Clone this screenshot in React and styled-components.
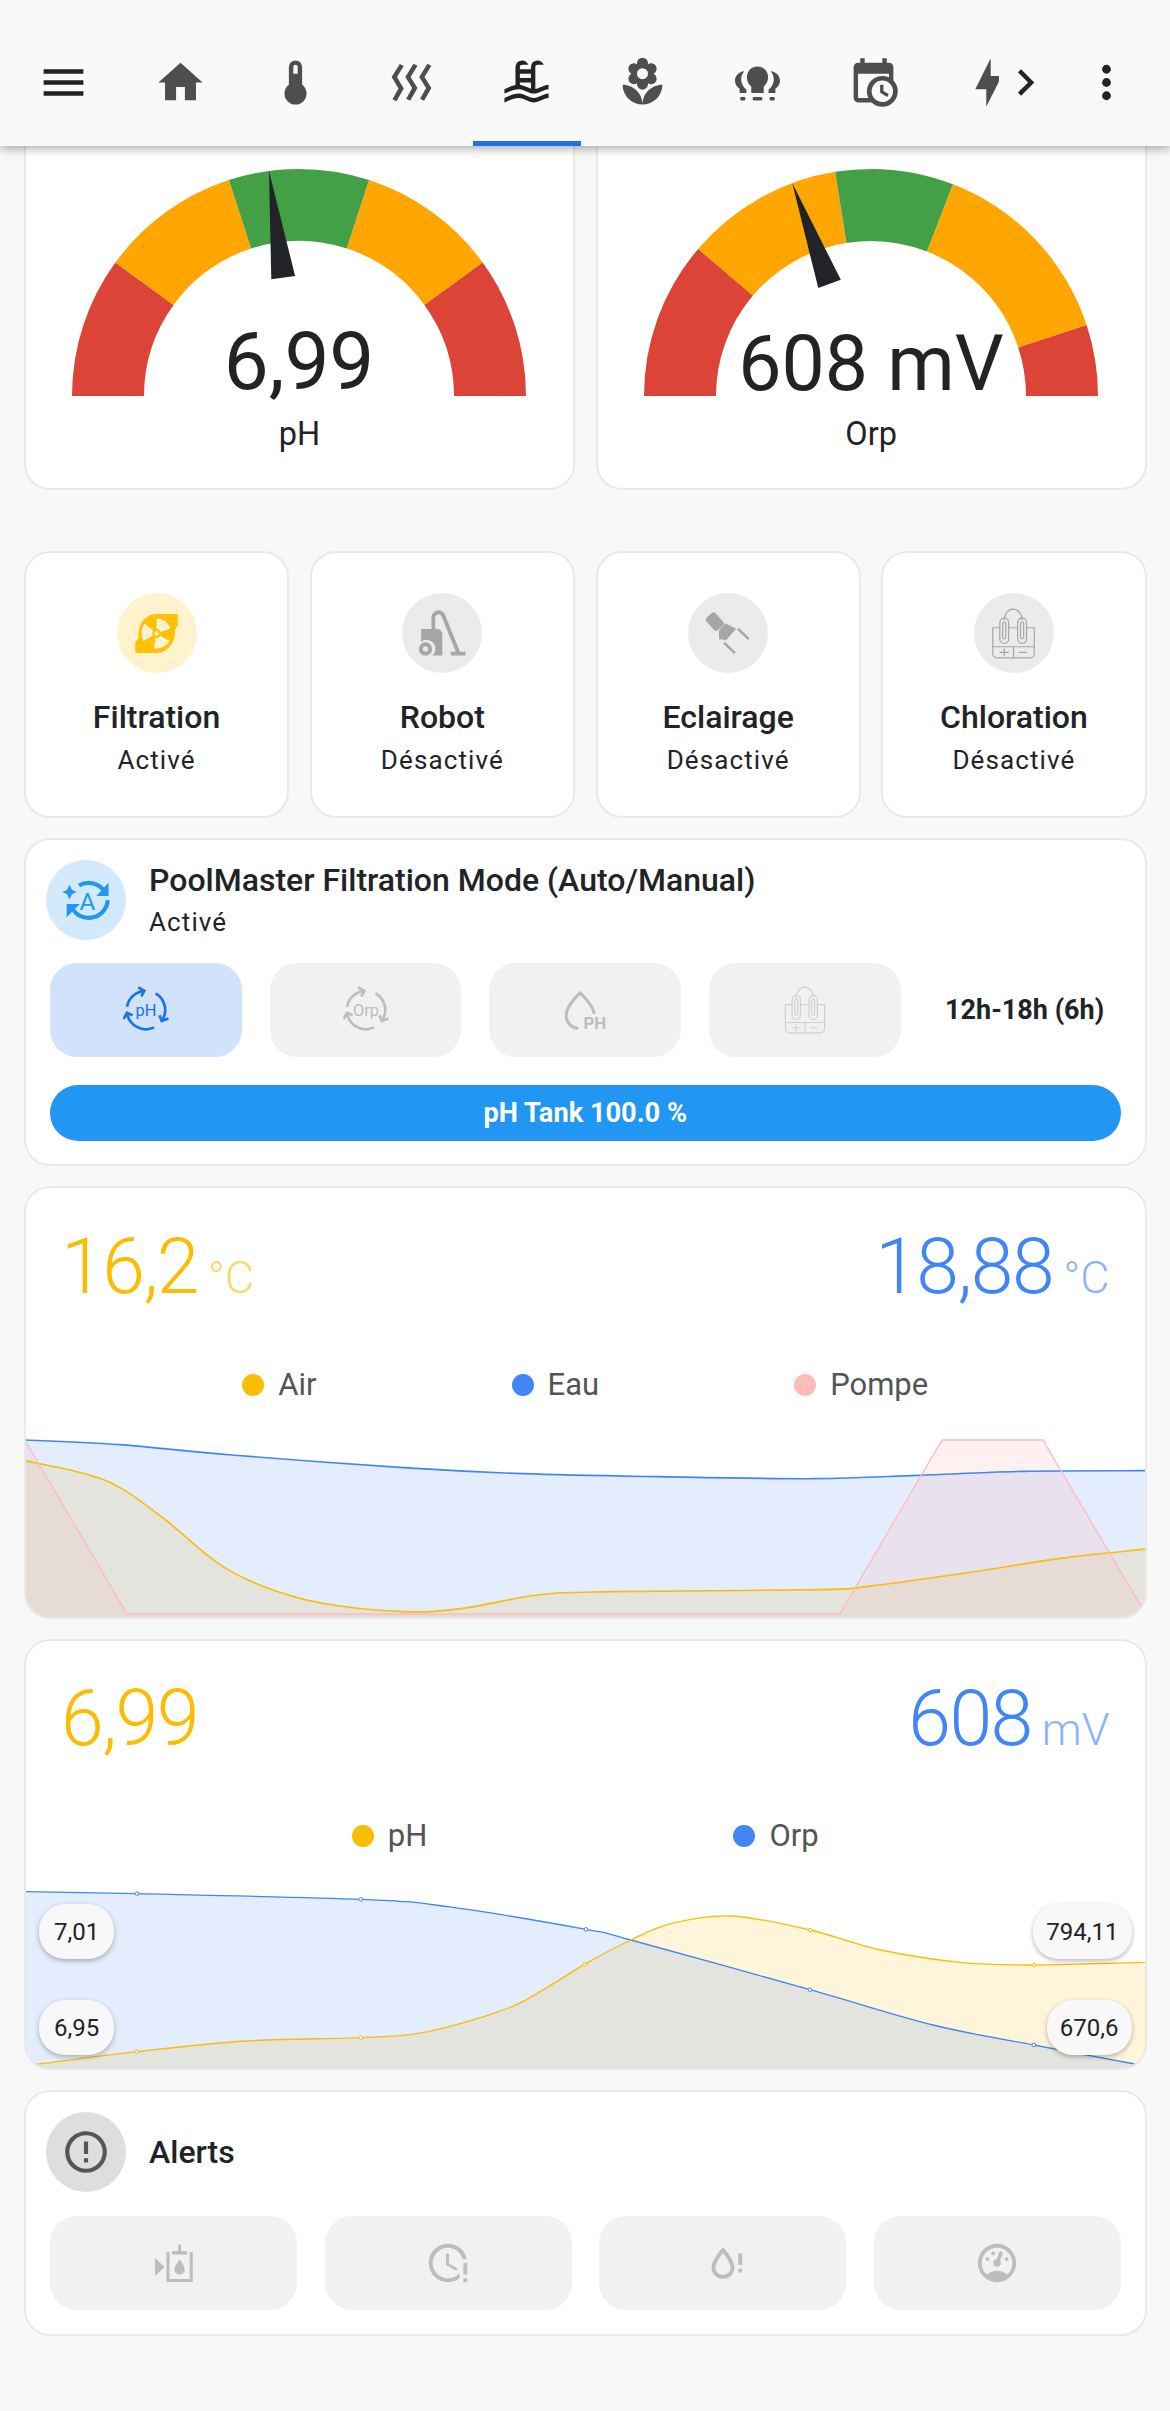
import React from 'react';
import styled, { createGlobalStyle } from 'styled-components';

const Global = createGlobalStyle`
  html, body { margin: 0; padding: 0; background: #f8f8f8; }
  body { font-family: Roboto, "Liberation Sans", sans-serif; color: #212327; }
  #root { height: 2411px; overflow: hidden; }
  * { box-sizing: border-box; }
`;

const P = {
  menu: 'M3,6H21V8H3V6M3,11H21V13H3V11M3,16H21V18H3V16Z',
  home: 'M10,20V14H14V20H19V12H22L12,3L2,12H5V20H10Z',
  thermo: 'M15 13V5A3 3 0 0 0 9 5V13A5 5 0 1 0 15 13M12 4A1 1 0 0 1 13 5V8H11V5A1 1 0 0 1 12 4Z',
  heat: 'M8.5 4.5L5.4 9.5L8.5 14.7L5.2 20.5L3.4 19.6L6.1 14.7L3 9.5L6.7 3.6L8.5 4.5M14.7 4.4L11.6 9.5L14.7 14.5L11.4 20.3L9.6 19.4L12.3 14.5L9.2 9.5L12.9 3.5L14.7 4.4M21 4.4L17.9 9.5L21 14.5L17.7 20.3L15.9 19.4L18.6 14.5L15.5 9.5L19.2 3.5L21 4.4',
  pool: 'M2,15C3.67,14.25 5.33,13.5 7,13.17V5A3,3 0 0,1 10,2C11.31,2 12.42,2.83 12.83,4H10A1,1 0 0,0 9,5V6H14V5A3,3 0 0,1 17,2C18.31,2 19.42,2.83 19.83,4H17A1,1 0 0,0 16,5V14.94C18,14.62 20,13 22,13V15C19.78,15 17.56,17 15.33,17C13.11,17 10.89,15 8.67,15C6.44,15 4.22,16 2,17V15M14,8H9V10H14V8M14,12H9V13C10.67,13.33 12.33,14.08 14,14.83V12M2,19C4.22,18 6.44,17 8.67,17C10.89,17 13.11,19 15.33,19C17.56,19 19.78,17 22,17V19C19.78,19 17.56,21 15.33,21C13.11,21 10.89,19 8.67,19C6.44,19 4.22,20 2,21V19Z',
  flower: 'M3,13A9,9 0 0,0 12,22C12,17 7.97,13 3,13M12,5.5A2.5,2.5 0 0,1 14.5,8A2.5,2.5 0 0,1 12,10.5A2.5,2.5 0 0,1 9.5,8A2.5,2.5 0 0,1 12,5.5M5.6,10.25A2.5,2.5 0 0,0 8.1,12.75C8.63,12.75 9.12,12.58 9.5,12.31C9.5,12.47 9.5,12.63 9.5,12.75A2.5,2.5 0 0,0 12,15.25A2.5,2.5 0 0,0 14.5,12.75C14.5,12.63 14.5,12.47 14.5,12.31C14.88,12.58 15.37,12.75 15.9,12.75C17.28,12.75 18.4,11.63 18.4,10.25C18.4,9.25 17.81,8.4 16.97,8C17.81,7.6 18.4,6.74 18.4,5.75C18.4,4.37 17.28,3.25 15.9,3.25C15.37,3.25 14.88,3.41 14.5,3.69C14.5,3.53 14.5,3.38 14.5,3.25A2.5,2.5 0 0,0 12,0.75A2.5,2.5 0 0,0 9.5,3.25C9.5,3.38 9.5,3.53 9.5,3.69C9.12,3.41 8.63,3.25 8.1,3.25A2.5,2.5 0 0,0 5.6,5.75C5.6,6.74 6.19,7.6 7.03,8C6.19,8.4 5.6,9.25 5.6,10.25M12,22A9,9 0 0,0 21,13C16,13 12,17 12,22Z',
  calendar: 'M15,13H16.5V15.82L18.94,17.23L18.19,18.53L15,16.69V13M19,8H5V19H9.67C9.24,18.09 9,17.07 9,16A7,7 0 0,1 16,9C17.07,9 18.09,9.24 19,9.67V8M5,21C3.89,21 3,20.1 3,19V5C3,3.89 3.89,3 5,3H6V1H8V3H16V1H18V3H19A2,2 0 0,1 21,5V11.1C22.24,12.36 23,14.09 23,16A7,7 0 0,1 16,23C14.09,23 12.36,22.24 11.1,21H5M16,11.15A4.85,4.85 0 0,0 11.15,16C11.15,18.68 13.32,20.85 16,20.85A4.85,4.85 0 0,0 20.85,16C20.85,13.32 18.68,11.15 16,11.15Z',
  bolt: 'M11 15H6L13 1V9H18L11 23V15Z',
  chevron: 'M8.59,16.58L13.17,12L8.59,7.41L10,6L16,12L10,18L8.59,16.58Z',
  dots: 'M12,16A2,2 0 0,1 14,18A2,2 0 0,1 12,20A2,2 0 0,1 10,18A2,2 0 0,1 12,16M12,10A2,2 0 0,1 14,12A2,2 0 0,1 12,14A2,2 0 0,1 10,12A2,2 0 0,1 12,10M12,4A2,2 0 0,1 14,6A2,2 0 0,1 12,8A2,2 0 0,1 10,6A2,2 0 0,1 12,4Z',
  alertCircle: 'M11,15H13V17H11V15M11,7H13V13H11V7M12,2C6.47,2 2,6.5 2,12A10,10 0 0,0 12,22A10,10 0 0,0 22,12A10,10 0 0,0 12,2M12,20A8,8 0 0,1 4,12A8,8 0 0,1 12,4A8,8 0 0,1 20,12A8,8 0 0,1 12,20Z',
  clockAlert: 'M11 7V13L16.2 16.1L17 14.9L12.5 12.2V7H11M20 12V18H22V12H20M20 20V22H22V20H20M18 20C16.3 21.3 14.3 22 12 22C6.5 22 2 17.5 2 12S6.5 2 12 2C16.8 2 20.9 5.4 21.8 10H19.7C18.8 6.6 15.7 4 12 4C7.6 4 4 7.6 4 12S7.6 20 12 20C14.4 20 16.5 18.9 18 17.3V20Z',
  waterAlert: 'M12 3.77L11.25 4.61C11.25 4.61 9.97 6.06 8.68 7.94C7.39 9.82 6 12.07 6 14.23A6 6 0 0 0 12 20.23A6 6 0 0 0 18 14.23C18 12.07 16.61 9.82 15.32 7.94C14.03 6.06 12.75 4.61 12.75 4.61L12 3.77M12 6.9C12.44 7.42 12.84 7.85 13.68 9.07C14.89 10.83 16 13.07 16 14.23C16 16.45 14.22 18.23 12 18.23C9.78 18.23 8 16.45 8 14.23C8 13.07 9.11 10.83 10.32 9.07C11.16 7.85 11.56 7.42 12 6.9M20 7V13H22V7H20M20 15V17H22V15H20Z',
  gauge: 'M12,2A10,10 0 0,0 2,12A10,10 0 0,0 12,22A10,10 0 0,0 22,12A10,10 0 0,0 12,2M12,4A8,8 0 0,1 20,12C20,14.4 19,16.5 17.3,18C15.9,16.7 14,16 12,16C10,16 8.2,16.7 6.7,18C5,16.5 4,14.4 4,12A8,8 0 0,1 12,4M14,5.89C13.62,5.9 13.26,6.15 13.1,6.54L11.81,9.77L11.71,10C11,10.13 10.41,10.6 10.14,11.26C9.73,12.29 10.23,13.45 11.26,13.86C12.29,14.27 13.45,13.77 13.86,12.74C14.12,12.08 14,11.32 13.57,10.76L13.67,10.5L14.96,7.29L14.97,7.26C15.17,6.75 14.92,6.17 14.41,5.96C14.28,5.91 14.15,5.89 14,5.89M10,6A1,1 0 0,0 9,7A1,1 0 0,0 10,8A1,1 0 0,0 11,7A1,1 0 0,0 10,6M7,9A1,1 0 0,0 6,10A1,1 0 0,0 7,11A1,1 0 0,0 8,10A1,1 0 0,0 7,9M17,9A1,1 0 0,0 16,10A1,1 0 0,0 17,11A1,1 0 0,0 18,10A1,1 0 0,0 17,9Z',
};

const Header = styled.header`
  position: relative;
  z-index: 2;
  height: 146px;
  display: flex;
  align-items: flex-start;
  background: #f9f9f9;
  box-shadow: 0 3px 9px rgba(0, 0, 0, 0.32);
`;
const ToolIcon = styled.span`
  flex: none;
  width: 53px;
  height: 53px;
  margin: 56px 0 0 ${p => p.$left || 0}px;
  color: #212327;
`;
const TabStrip = styled.nav`
  flex: none;
  width: 873px;
  margin-left: 36.5px;
  display: flex;
  gap: 7.5px;
  overflow: hidden;
`;
const Tab = styled.div`
  flex: 0 0 108px;
  height: 146px;
  padding-top: 24px;
  display: flex;
  align-items: center;
  justify-content: center;
  border-bottom: 5px solid ${p => (p.$active ? '#1a73e8' : 'transparent')};
  color: ${p => (p.$active ? '#212327' : '#4d4e50')};
`;
const Svg = styled.svg`
  display: block;
  width: ${p => p.$size || 53}px;
  height: ${p => p.$size || 53}px;
  fill: currentColor;
`;
const Icon = ({ d, size }) => (
  <Svg viewBox="0 0 24 24" $size={size}><path d={d} /></Svg>
);

const BulbGroup = () => (
  <Svg viewBox="0 0 24 24">
    <path d="M12 4.8C9.2 4.8 7.2 6.9 7.2 9.6C7.2 11.6 8.2 13 9.2 13.9V16.8H14.8V13.9C15.8 13 16.8 11.6 16.8 9.6C16.8 6.9 14.8 4.8 12 4.8Z" />
    <rect x="9.8" y="18.6" width="4.4" height="1.5" rx=".6" />
    <path d="M6 6.9C3.6 7.1 1.8 9 1.8 11.2C1.8 12.8 2.8 14 3.9 14.8V16.8H7V15.3C6 14.6 5.6 13.8 5.1 12.8C4.2 10.8 4.6 8.6 6 6.9Z" />
    <rect x="4.2" y="18.6" width="2.3" height="1.5" rx=".5" />
    <g transform="translate(24 0) scale(-1 1)">
      <path d="M6 6.9C3.6 7.1 1.8 9 1.8 11.2C1.8 12.8 2.8 14 3.9 14.8V16.8H7V15.3C6 14.6 5.6 13.8 5.1 12.8C4.2 10.8 4.6 8.6 6 6.9Z" />
      <rect x="4.2" y="18.6" width="2.3" height="1.5" rx=".5" />
    </g>
  </Svg>
);

const polar = (r, a) => {
  const t = (a * Math.PI) / 180;
  return [-r * Math.cos(t), -r * Math.sin(t)];
};
const annular = (r0, r1, a0, a1) => {
  const [x0, y0] = polar(r1, a0);
  const [x1, y1] = polar(r1, a1);
  const [x2, y2] = polar(r0, a1);
  const [x3, y3] = polar(r0, a0);
  return `M${x0} ${y0}A${r1} ${r1} 0 0 1 ${x1} ${y1}L${x2} ${y2}A${r0} ${r0} 0 0 0 ${x3} ${y3}Z`;
};

const FanPump = () => (
  <Svg viewBox="0 0 24 24" $size={53}>
    <path fill="#ffc107" d="M12 3.2H21.6V8.2C21.2 9.2 20.6 10 20.4 10.5C20.7 15.8 17 20.8 12 20.8H2.4V15.8L3.9 14.2C3.2 8.5 6.5 3.4 12 3.2Z" />
    <g transform="translate(12 12)" fill="#fff3cd">
      <path d={annular(2, 6.8, 90, 160)} />
      <path d={annular(2, 6.8, 210, 280)} />
      <path d={annular(2, 6.8, 330, 400)} />
      <circle r="1" />
    </g>
  </Svg>
);

const Vacuum = () => (
  <Svg viewBox="0 0 24 24">
    <path d="M2.3 10H7V4.8A3.2 3.2 0 0 1 13.2 3.6L19.9 20.3H22.4V22H15.7V20.3H18L11.6 4.3A1.5 1.5 0 0 0 8.7 4.9V10H9.6A2.3 2.3 0 0 1 11.9 12.3V22H7.4A4 4 0 0 0 2.3 15.8Z" />
    <path fillRule="evenodd" d="M4.3 16A3 3 0 1 1 4.29 22A3 3 0 1 1 4.3 16ZM4.3 17.8A1.2 1.2 0 1 0 4.31 20.2A1.2 1.2 0 1 0 4.3 17.8Z" />
  </Svg>
);

const Spot = () => (
  <Svg viewBox="0 0 24 24">
    <rect x="3" y="2.8" width="5.6" height="7.6" rx="1.4" transform="rotate(-42 5.8 6.6)" />
    <path d="M10.6 7.4L15.4 9.8L11 14.9L7.7 14.6L7.7 10.6Z" />
    <path d="M16.2 9.8L21.2 14.6M10 16.1L14.9 20.9" stroke="currentColor" strokeWidth="1.1" fill="none" />
  </Svg>
);

const CellSvg = styled(Svg)`
  fill: none;
`;
const Cell = ({ size = 53 }) => (
  <CellSvg viewBox="0 0 24 24" $size={size}>
    <g stroke="currentColor" strokeWidth=".55">
      <path d="M5.8 9.4H2.6V21A2 2 0 0 0 4.6 23H19.4A2 2 0 0 0 21.4 21V9.4H18M9.8 9.4H13.9" />
      <path d="M2.6 18H21.4M12 18V23M5.7 20.5H9.9M7.8 18.8V22.2M14.2 20.5H18" />
      <path d="M7.8 6A4.05 5 0 0 1 15.9 6" />
      <rect x="5.8" y="5" width="4" height="11.5" rx="2" />
      <rect x="13.9" y="5" width="4" height="11.5" rx="2" />
      <rect x="7.1" y="6.8" width="1.4" height="7.6" rx=".7" />
      <rect x="15.2" y="6.8" width="1.4" height="7.6" rx=".7" />
    </g>
  </CellSvg>
);

const ModeIcon = () => (
  <Svg viewBox="0 0 24 24">
    <path d="M8.6 5.2A8.6 8.6 0 0 1 20.4 8.4M21.6 11.8A8.6 8.6 0 0 1 5.6 15.6" fill="none" stroke="currentColor" strokeWidth="1.9" />
    <path d="M22 4V10H16.4ZM3 19.6V13.6H9Z" />
    <path d="M4.3 4.8L5.4 7.2L7.6 8.2L5.4 9.2L4.3 11.6L3.2 9.2L1 8.2L3.2 7.2Z" />
    <text x="12.4" y="16.4" textAnchor="middle" fontSize="11" fontFamily="Roboto, sans-serif">A</text>
  </Svg>
);

const Cycle = ({ label }) => {
  const c = (a, r = 9.6) => {
    const t = (a * Math.PI) / 180;
    return [12 + r * Math.sin(t), 12 - r * Math.cos(t)];
  };
  const arcs = [[-80, -5], [30, 125], [155, 262]].map(([a, b]) => {
    const [x0, y0] = c(a);
    const [x1, y1] = c(b);
    const [ax, ay] = c(b - 14, 12);
    const [bx, by] = c(b - 14, 7.2);
    return `M${x0} ${y0}A9.6 9.6 0 0 1 ${x1} ${y1}M${ax} ${ay}L${x1} ${y1}L${bx} ${by}`;
  });
  return (
    <Svg viewBox="0 0 24 24" $size={48}>
      <path d={arcs.join('')} fill="none" stroke="currentColor" strokeWidth="1.35" />
      <text x="12" y="15" textAnchor="middle" fontSize="8.2" fontFamily="Roboto, sans-serif">{label}</text>
    </Svg>
  );
};

const DropPh = () => (
  <Svg viewBox="0 0 24 24" $size={48}>
    <path d="M16.6 14C16.4 10 9.6 3.4 9.6 3.4C9.6 3.4 2.6 9.6 2.6 14.6C2.6 18.2 5 20.8 8.6 21.2" fill="none" stroke="currentColor" strokeWidth="1.5" />
    <text x="11.2" y="21.5" fontSize="8.4" fontWeight="700" fontFamily="Roboto, sans-serif">PH</text>
  </Svg>
);

const TankIcon = () => (
  <Svg viewBox="0 0 24 24" $size={48}>
    <path d="M2.5 9.5L7.3 14L2.5 18.5Z" />
    <path d="M9 6.5V20.7H20.6V6.5" fill="none" stroke="currentColor" strokeWidth="1.5" />
    <path d="M14.1 2.8H15.5V6H18.6V7.7H11V6H14.1Z" />
    <path d="M14.8 10.2C14.8 10.2 12.2 13.4 12.2 15.2A2.6 2.6 0 0 0 17.4 15.2C17.4 13.4 14.8 10.2 14.8 10.2Z" />
  </Svg>
);

const Main = styled.main`
  padding: 0 23.5px 0 24px;
  display: flex;
  flex-direction: column;
  gap: 20px;
`;
const Card = styled.section`
  background: #fff;
  border: 2px solid #e9e9e9;
  border-radius: 26px;
  overflow: hidden;
`;
const GaugeRow = styled.div`
  display: grid;
  grid-template-columns: 1fr 1fr;
  gap: 21px;
  margin-bottom: 41px;
`;
const GaugeCard = styled(Card)`
  height: 344px;
  border-top: 0;
  border-radius: 0 0 26px 26px;
  padding-top: 22px;
  display: flex;
  flex-direction: column;
  align-items: center;
`;
const GaugeSvg = styled.svg`
  display: block;
  width: 480px;
  height: 228px;
  overflow: visible;
  flex: none;
`;
const GaugeValue = styled.text`
  font-family: Roboto, sans-serif;
  fill: #212327;
  text-anchor: middle;
`;
const GaugeLabel = styled.div`
  margin-top: 18px;
  font-size: 32.5px;
  line-height: 40px;
  color: #212327;
`;
const Gauge = ({ value, fontSize, baseline, segments, needle, label }) => (
  <GaugeCard>
    <GaugeSvg viewBox="-240 -228 480 228">
      {segments.map(([a0, a1, color]) => (
        <path key={a0} d={annular(155, 227, a0, a1)} fill={color} />
      ))}
      <polygon points="-119.5,-12 -227,0 -119.5,12" fill="#212327" transform={`rotate(${needle})`} />
      <GaugeValue y={baseline} fontSize={fontSize}>{value}</GaugeValue>
    </GaugeSvg>
    <GaugeLabel>{label}</GaugeLabel>
  </GaugeCard>
);

const TileRow = styled.div`
  display: grid;
  grid-template-columns: repeat(4, 1fr);
  gap: 20.7px;
`;
const Tile = styled(Card)`
  height: 267px;
  padding-top: 40px;
  display: flex;
  flex-direction: column;
  align-items: center;
`;
const IconDisc = styled.div`
  flex: none;
  width: 80px;
  height: 80px;
  border-radius: 50%;
  display: flex;
  align-items: center;
  justify-content: center;
  background: ${p => p.$bg};
  color: ${p => p.$fg};
`;
const Title = styled.div`
  font-size: 32px;
  font-weight: 500;
  line-height: 36px;
  color: #212327;
`;
const Sub = styled.div`
  font-size: 26px;
  line-height: 32px;
  letter-spacing: 1.1px;
  color: #212327;
`;
const TileTitle = styled(Title)`
  margin-top: 26px;
`;
const TileSub = styled(Sub)`
  margin-top: 9px;
`;
const HeadRow = styled.div`
  display: flex;
  align-items: center;
  gap: 23px;
  padding: 20px 0 0 20px;
`;
const HeadText = styled.div`
  display: flex;
  flex-direction: column;
  gap: 8px;
`;
const ModeCard = styled(Card)`
  height: 328px;
`;
const ButtonGrid = styled.div`
  display: grid;
  grid-template-columns: repeat(${p => p.$cols}, 1fr);
  gap: ${p => p.$gap}px;
  margin: ${p => p.$top}px 24px ${p => p.$bottom || 0}px;
`;
const ActionButton = styled.div`
  height: 94px;
  border-radius: 27px;
  display: flex;
  align-items: center;
  justify-content: center;
  background: ${p => (p.$active ? '#d1e3fa' : '#f1f1f3')};
  color: ${p => p.$fg || (p.$active ? '#1a73e8' : '#bdbdbd')};
`;
const Schedule = styled.div`
  display: flex;
  align-items: center;
  justify-content: center;
  font-size: 27px;
  font-weight: 700;
  white-space: nowrap;
  color: #212327;
`;
const TankBar = styled.div`
  height: 56px;
  margin: 28px 24px 0;
  border-radius: 28px;
  background: #2196f3;
  color: #fff;
  font-size: 27.2px;
  font-weight: 700;
  display: flex;
  align-items: center;
  justify-content: center;
`;

const ChartCard = styled(Card)`
  height: ${p => p.$height}px;
  position: relative;
`;
const ValueRow = styled.div`
  display: flex;
  justify-content: space-between;
  padding: ${p => p.$top}px 35px 0;
`;
const Reading = styled.div`
  display: flex;
  align-items: baseline;
  gap: 10px;
  font-weight: 300;
  color: ${p => p.$color};
`;
const ReadingValue = styled.span`
  font-size: 77px;
  line-height: 77px;
  letter-spacing: -1.5px;
`;
const ReadingUnit = styled.span`
  font-size: 45px;
  line-height: 45px;
  opacity: 0.6;
`;
const Legend = styled.div`
  display: flex;
  justify-content: center;
  gap: ${p => p.$gap}px;
  margin-top: ${p => p.$top}px;
`;
const LegendItem = styled.div`
  display: flex;
  align-items: center;
  gap: 14px;
  font-size: 31px;
  line-height: 36px;
  color: #555;
`;
const LegendDot = styled.i`
  display: block;
  width: 22px;
  height: 22px;
  border-radius: 50%;
  background: ${p => p.$color};
`;
const Plot = styled.svg`
  display: block;
  width: 100%;
  height: ${p => p.$height}px;
  margin-top: ${p => p.$top}px;
  overflow: hidden;
`;
const Bubble = styled.div`
  position: absolute;
  ${p => (p.$right ? `right: ${p.$right}px;` : `left: ${p.$left}px;`)}
  top: ${p => p.$y}px;
  height: 55px;
  padding: 0 ${p => p.$pad || 15}px;
  border-radius: 26px;
  background: #f8f8f8;
  box-shadow: 0 2px 5px rgba(0, 0, 0, 0.28);
  display: flex;
  align-items: center;
  font-size: 24px;
  color: #212327;
`;

const smooth = pts => {
  let d = `M${pts[0][0]} ${pts[0][1]}`;
  for (let i = 0; i < pts.length - 1; i++) {
    const p0 = pts[Math.max(i - 1, 0)];
    const p1 = pts[i];
    const p2 = pts[i + 1];
    const p3 = pts[Math.min(i + 2, pts.length - 1)];
    const c1 = [p1[0] + (p2[0] - p0[0]) / 6, p1[1] + (p2[1] - p0[1]) / 6];
    const c2 = [p2[0] - (p3[0] - p1[0]) / 6, p2[1] - (p3[1] - p1[1]) / 6];
    d += `C${c1[0]} ${c1[1]} ${c2[0]} ${c2[1]} ${p2[0]} ${p2[1]}`;
  }
  return d;
};
const toPlot = (raw, top) => raw.map(([x, y]) => [x / 1.34 - 26, (y - top) / 3]);
const linePath = (pts, curved) => (curved ? smooth(pts) : `M${pts.map(p => p.join(' ')).join('L')}`);

const AreaFill = ({ pts, color, curved = true, opacity = 0.15 }) => (
  <path
    d={`${linePath(pts, curved)}L${pts[pts.length - 1][0]} 180L${pts[0][0]} 180Z`}
    fill={color}
    fillOpacity={opacity}
  />
);
const AreaLine = ({ pts, color, curved = true, width = 1.6 }) => (
  <path d={linePath(pts, curved)} fill="none" stroke={color} strokeWidth={width} />
);

const eau = toPlot([[33, 783], [160, 797], [310, 828], [540, 866], [700, 884], [880, 893], [1090, 899], [1230, 889], [1370, 877], [1535, 875]], 780);
const air = toPlot([[33, 845], [110, 882], [160, 925], [220, 1020], [290, 1150], [350, 1220], [430, 1272], [540, 1298], [620, 1288], [720, 1248], [820, 1238], [1100, 1232], [1170, 1220], [1300, 1180], [1420, 1138], [1535, 1110]], 780);
const pompe = toPlot([[33, 783], [170, 1305], [1125, 1305], [1262, 783], [1397, 783], [1535, 1305]], 780);
const orp = toPlot([[33, 790], [183, 796], [483, 813], [600, 835], [785, 903], [845, 935], [1085, 1084], [1250, 1190], [1385, 1250], [1520, 1307]], 788);
const ph = toPlot([[48, 1308], [183, 1270], [330, 1238], [483, 1228], [560, 1215], [640, 1170], [700, 1120], [783, 1008], [845, 935], [900, 885], [980, 863], [1085, 905], [1180, 965], [1290, 1003], [1385, 1010], [1535, 1002]], 788);
const orpDots = toPlot([[183, 796], [483, 813], [785, 903], [1085, 1084], [1385, 1250]], 788);
const phDots = toPlot([[183, 1270], [483, 1228], [783, 1008], [1085, 905], [1385, 1010]], 788);

const YELLOW = '#fbbc04';
const BLUE = '#4285f4';
const PINK = '#ffbaba';

const IconGray = { $bg: '#ebebeb', $fg: '#a6a6a6' };

const App = () => (
  <>
    <Global />
    <Header>
      <ToolIcon $left={36.5}><Icon d={P.menu} /></ToolIcon>
      <TabStrip>
        <Tab><Icon d={P.home} /></Tab>
        <Tab><Icon d={P.thermo} /></Tab>
        <Tab><Icon d={P.heat} /></Tab>
        <Tab $active><Icon d={P.pool} /></Tab>
        <Tab><Icon d={P.flower} /></Tab>
        <Tab><BulbGroup /></Tab>
        <Tab><Icon d={P.calendar} /></Tab>
        <Tab><Icon d={P.bolt} /></Tab>
      </TabStrip>
      <ToolIcon><Icon d={P.chevron} /></ToolIcon>
      <ToolIcon $left={28}><Icon d={P.dots} /></ToolIcon>
    </Header>
    <Main>
      <GaugeRow>
        <Gauge
          value="6,99" label="pH" fontSize={80} baseline={-7} needle={82.4}
          segments={[[0, 36, '#db4437'], [36, 72, '#ffa600'], [72, 108, '#43a047'], [108, 144, '#ffa600'], [144, 180, '#db4437']]}
        />
        <Gauge
          value="608 mV" label="Orp" fontSize={77} baseline={-6} needle={69.7}
          segments={[[0, 40.4, '#db4437'], [40.4, 80.9, '#ffa600'], [80.9, 111.2, '#43a047'], [111.2, 161.8, '#ffa600'], [161.8, 180, '#db4437']]}
        />
      </GaugeRow>
      <TileRow>
        <Tile>
          <IconDisc $bg="#fff3cd" $fg="#ffc107"><FanPump /></IconDisc>
          <TileTitle>Filtration</TileTitle>
          <TileSub>Activé</TileSub>
        </Tile>
        <Tile>
          <IconDisc {...IconGray}><Vacuum /></IconDisc>
          <TileTitle>Robot</TileTitle>
          <TileSub>Désactivé</TileSub>
        </Tile>
        <Tile>
          <IconDisc {...IconGray}><Spot /></IconDisc>
          <TileTitle>Eclairage</TileTitle>
          <TileSub>Désactivé</TileSub>
        </Tile>
        <Tile>
          <IconDisc {...IconGray}><Cell /></IconDisc>
          <TileTitle>Chloration</TileTitle>
          <TileSub>Désactivé</TileSub>
        </Tile>
      </TileRow>
      <ModeCard>
        <HeadRow>
          <IconDisc $bg="#d3e9fc" $fg="#2196f3"><ModeIcon /></IconDisc>
          <HeadText>
            <Title>PoolMaster Filtration Mode (Auto/Manual)</Title>
            <Sub>Activé</Sub>
          </HeadText>
        </HeadRow>
        <ButtonGrid $cols={5} $gap={28} $top={23}>
          <ActionButton $active><Cycle label="pH" /></ActionButton>
          <ActionButton><Cycle label="Orp" /></ActionButton>
          <ActionButton><DropPh /></ActionButton>
          <ActionButton $fg="#cfcfcf"><Cell size={50} /></ActionButton>
          <Schedule>12h-18h (6h)</Schedule>
        </ButtonGrid>
        <TankBar>pH Tank 100.0 %</TankBar>
      </ModeCard>
      <ChartCard $height={433}>
        <ValueRow $top={41}>
          <Reading $color={YELLOW}><ReadingValue>16,2</ReadingValue><ReadingUnit>°C</ReadingUnit></Reading>
          <Reading $color={BLUE}><ReadingValue>18,88</ReadingValue><ReadingUnit>°C</ReadingUnit></Reading>
        </ValueRow>
        <Legend $gap={195} $top={61}>
          <LegendItem><LegendDot $color={YELLOW} />Air</LegendItem>
          <LegendItem><LegendDot $color={BLUE} />Eau</LegendItem>
          <LegendItem><LegendDot $color={PINK} />Pompe</LegendItem>
        </Legend>
        <Plot viewBox="0 0 1118 178" $height={178} $top={36}>
          <AreaFill pts={air} color={YELLOW} />
          <AreaFill pts={eau} color={BLUE} />
          <AreaFill pts={pompe} color={PINK} curved={false} opacity={0.2} />
          <AreaLine pts={eau} color={BLUE} />
          <AreaLine pts={air} color={YELLOW} />
          <AreaLine pts={pompe} color={PINK} curved={false} width={1.3} />
        </Plot>
      </ChartCard>
      <ChartCard $height={431}>
        <ValueRow $top={40}>
          <Reading $color={YELLOW}><ReadingValue>6,99</ReadingValue></Reading>
          <Reading $color={BLUE}><ReadingValue>608</ReadingValue><ReadingUnit>mV</ReadingUnit></Reading>
        </ValueRow>
        <Legend $gap={306} $top={60}>
          <LegendItem><LegendDot $color={YELLOW} />pH</LegendItem>
          <LegendItem><LegendDot $color={BLUE} />Orp</LegendItem>
        </Legend>
        <Plot viewBox="0 0 1118 177" $height={177} $top={37}>
          <AreaFill pts={ph} color={YELLOW} />
          <AreaFill pts={orp} color={BLUE} />
          <AreaLine pts={orp} color={BLUE} width={1.3} />
          <AreaLine pts={ph} color={YELLOW} width={1.3} />
          {orpDots.map(([x, y]) => <circle key={x} cx={x} cy={y} r="1.8" fill="#fff" stroke={BLUE} strokeWidth="1" />)}
          {phDots.map(([x, y]) => <circle key={x} cx={x} cy={y} r="1.8" fill="#fff" stroke={YELLOW} strokeWidth="1" />)}
        </Plot>
        <Bubble $left={13} $y={263}>7,01</Bubble>
        <Bubble $left={13} $y={359}>6,95</Bubble>
        <Bubble $right={13} $y={263} $pad={13}>794,11</Bubble>
        <Bubble $right={13} $y={359} $pad={13}>670,6</Bubble>
      </ChartCard>
      <Card>
        <HeadRow>
          <IconDisc $bg="#dedee0" $fg="#55565a"><Icon d={P.alertCircle} size={50} /></IconDisc>
          <Title>Alerts</Title>
        </HeadRow>
        <ButtonGrid $cols={4} $gap={27.5} $top={24} $bottom={24}>
          <ActionButton><TankIcon /></ActionButton>
          <ActionButton><Icon d={P.clockAlert} size={46} /></ActionButton>
          <ActionButton><Icon d={P.waterAlert} size={46} /></ActionButton>
          <ActionButton><Icon d={P.gauge} size={46} /></ActionButton>
        </ButtonGrid>
      </Card>
    </Main>
  </>
);

export default App;
